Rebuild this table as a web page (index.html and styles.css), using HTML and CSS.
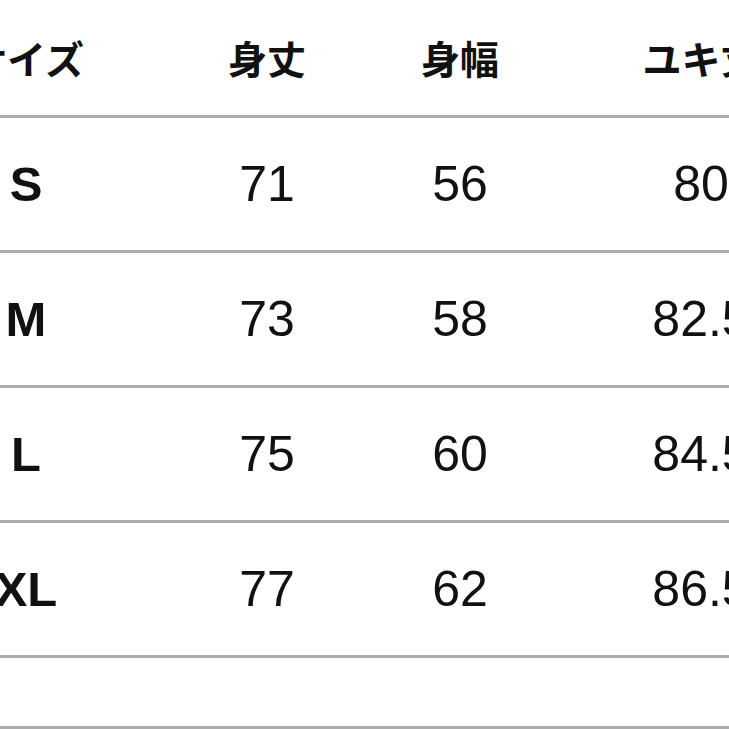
FILE: index.html
```html
<!DOCTYPE html>
<html lang="ja">
<head>
<meta charset="utf-8">
<title>サイズ表</title>
<link rel="stylesheet" href="styles.css">
</head>
<body>
<div class="table">
  <div class="row head">
    <div class="cell">サイズ</div>
    <div class="cell">身丈</div>
    <div class="cell">身幅</div>
    <div class="cell">ユキ丈</div>
  </div>
  <div class="row">
    <div class="cell size">S</div>
    <div class="cell num">71</div>
    <div class="cell num">56</div>
    <div class="cell num">80</div>
  </div>
  <div class="row">
    <div class="cell size">M</div>
    <div class="cell num">73</div>
    <div class="cell num">58</div>
    <div class="cell num">82.5</div>
  </div>
  <div class="row">
    <div class="cell size">L</div>
    <div class="cell num">75</div>
    <div class="cell num">60</div>
    <div class="cell num">84.5</div>
  </div>
  <div class="row">
    <div class="cell size">XL</div>
    <div class="cell num">77</div>
    <div class="cell num">62</div>
    <div class="cell num">86.5</div>
  </div>
  <div class="row spacer"></div>
</div>
</body>
</html>
```

FILE: styles.css
```css
html, body {
  margin: 0;
  padding: 0;
  background: #ffffff;
  overflow: hidden;
}

.table {
  width: 964px;
  margin-left: -94px;
  color: #111111;
}

.row {
  display: grid;
  grid-template-columns: 240px 242px 144px 338px;
  height: 132px;
  border-bottom: 3px solid #ababab;
  align-items: center;
}

.row.head {
  height: 115px;
}

.row.spacer {
  height: 68px;
}

.cell {
  text-align: center;
  white-space: nowrap;
}

.head .cell {
  font-family: "Noto Sans CJK JP", sans-serif;
  font-weight: 700;
  font-size: 39px;
  line-height: 1;
}

.size {
  font-family: "Liberation Sans", Arial, sans-serif;
  font-weight: 700;
  font-size: 49px;
  line-height: 1;
}

.num {
  font-family: "Liberation Sans", Arial, sans-serif;
  font-weight: 400;
  font-size: 50px;
  line-height: 1;
}
```
